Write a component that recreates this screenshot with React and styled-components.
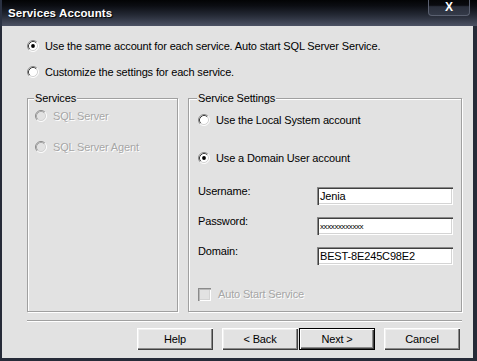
import React from "react"
import styled, { createGlobalStyle } from "styled-components"

const GlobalStyle = createGlobalStyle`
  html, body {
    margin: 0;
    padding: 0;
    background: #262b38;
  }
  * {
    box-sizing: border-box;
  }
`

const FACE = "#e2e2e2"

const Radio = ({ checked, disabled }) => (
  <RadioSvg width="12" height="12" viewBox="0 0 12 12">
    <circle cx="6" cy="6" r="5" fill={disabled ? FACE : "#fff"} />
    <path d="M2.11 9.89 A5.5 5.5 0 0 1 9.89 2.11" fill="none" stroke="#8a8a8a" strokeWidth="1" />
    <path d="M2.82 9.18 A4.5 4.5 0 0 1 9.18 2.82" fill="none" stroke={disabled ? "#a8a8a8" : "#404040"} strokeWidth="1" />
    <path d="M9.89 2.11 A5.5 5.5 0 0 1 2.11 9.89" fill="none" stroke="#fff" strokeWidth="1" />
    <path d="M9.18 2.82 A4.5 4.5 0 0 1 2.82 9.18" fill="none" stroke="#d4d4d4" strokeWidth="1" />
    {checked && <circle cx="6" cy="6" r="1.9" fill="#000" />}
  </RadioSvg>
)

const Services = () => (
  <Frame>
    <GlobalStyle />
    <TitleBar>
      <Title>Services Accounts</Title>
      <CloseButton>X</CloseButton>
    </TitleBar>
    <Body>
      <TopOptions>
        <Option>
          <Radio checked />
          <OptionText>Use the same account for each service. Auto start SQL Server Service.</OptionText>
        </Option>
        <Option>
          <Radio />
          <OptionText>Customize the settings for each service.</OptionText>
        </Option>
      </TopOptions>

      <Groups>
        <GroupBox $pad={7}>
          <Legend>Services</Legend>
          <Option $top={4}>
            <Radio disabled />
            <OptionText $disabled>SQL Server</OptionText>
          </Option>
          <Option $top={17}>
            <Radio disabled />
            <OptionText $disabled>SQL Server Agent</OptionText>
          </Option>
        </GroupBox>

        <GroupBox $pad={9}>
          <Legend>Service Settings</Legend>
          <Option $top={8}>
            <Radio />
            <OptionText>Use the Local System account</OptionText>
          </Option>
          <Option $top={24}>
            <Radio checked />
            <OptionText>Use a Domain User account</OptionText>
          </Option>

          <FieldRow $top={22}>
            <FieldLabel>Username:</FieldLabel>
            <Field>Jenia</Field>
          </FieldRow>
          <FieldRow $top={12}>
            <FieldLabel>Password:</FieldLabel>
            <Field $secret>xxxxxxxxxxxx</Field>
          </FieldRow>
          <FieldRow $top={12}>
            <FieldLabel>Domain:</FieldLabel>
            <Field>BEST-8E245C98E2</Field>
          </FieldRow>

          <Option $top={22}>
            <CheckBox />
            <OptionText $disabled>Auto Start Service</OptionText>
          </Option>
        </GroupBox>
      </Groups>

      <Separator />

      <ButtonRow>
        <Button>Help</Button>
        <WizardPair>
          <Button>&lt; Back</Button>
          <Button $default>Next &gt;</Button>
        </WizardPair>
        <Button>Cancel</Button>
      </ButtonRow>
    </Body>
  </Frame>
)

export default function App() {
  return <Services />
}

const Frame = styled.div`
  width: 477px;
  height: 361px;
  display: flex;
  flex-direction: column;
  background: #262b38;
  font-family: "Liberation Sans", Arial, sans-serif;
  font-size: 11px;
  letter-spacing: -0.15px;
  color: #000;
  overflow: hidden;
`

const TitleBar = styled.div`
  height: 26px;
  flex: none;
  display: flex;
  justify-content: space-between;
  align-items: flex-start;
  background: linear-gradient(to bottom, #030405 0%, #0b0d12 22%, #262b37 60%, #4c5264 100%);
  border-left: 2px solid #2a3142;
`

const Title = styled.div`
  padding: 7px 0 0 6px;
  font-size: 11.5px;
  font-weight: bold;
  letter-spacing: 0.1px;
  color: #fff;
  text-shadow: 1px 1px 1px #000;
`

const CloseButton = styled.div`
  width: 42px;
  height: 16px;
  margin-right: 7px;
  display: flex;
  align-items: center;
  justify-content: center;
  border: 1px solid #5a6070;
  border-top: none;
  border-radius: 0 0 4px 4px;
  background: linear-gradient(to bottom, #050608 0%, #0a0b10 35%, #2a2f3c 45%, #343a48 100%);
  color: #fff;
  font-weight: bold;
  font-size: 12px;
  padding-bottom: 2px;
`

const Body = styled.div`
  flex: 1;
  display: flex;
  flex-direction: column;
  margin: 0 4px 3px 2px;
  padding: 13px 11px 0 25px;
  background: ${FACE};
`

const TopOptions = styled.div`
  display: flex;
  flex-direction: column;
  gap: 12px;
`

const Option = styled.div`
  display: flex;
  align-items: center;
  gap: 6px;
  height: 14px;
  margin-top: ${props => props.$top || 0}px;
`

const RadioSvg = styled.svg`
  display: block;
  flex: none;
`

const OptionText = styled.span`
  line-height: 13px;
  white-space: nowrap;
  color: ${props => (props.$disabled ? "#a6a6a6" : "#000")};
  text-shadow: ${props => (props.$disabled ? "1px 1px 0 #fff" : "none")};
`

const Groups = styled.div`
  display: grid;
  grid-template-columns: 151px 274px;
  column-gap: 10px;
  height: 220px;
  margin-top: 13px;
`

const GroupBox = styled.fieldset`
  margin: 0;
  min-width: 0;
  padding: 0 0 0 ${props => props.$pad}px;
  border: 1px solid #a0a0a0;
  box-shadow: inset 1px 1px 0 #fff, 1px 1px 0 #fff;
  display: flex;
  flex-direction: column;
`

const Legend = styled.legend`
  padding: 0 1px;
  margin-left: -1px;
  line-height: 13px;
  background: ${FACE};
  color: #000;
`

const FieldRow = styled.div`
  display: flex;
  align-items: flex-start;
  height: 18px;
  margin-top: ${props => props.$top}px;
`

const FieldLabel = styled.span`
  width: 119px;
  margin-top: -2px;
  line-height: 13px;
`

const Field = styled.div`
  width: 136px;
  height: 18px;
  padding: 0 0 0 3px;
  display: flex;
  align-items: center;
  background: #fff;
  box-shadow: inset 1px 1px 0 #8a8a8a, inset 2px 2px 0 #404040, inset -1px -1px 0 #fff, inset -2px -2px 0 #d4d4d4;
  font-size: ${props => (props.$secret ? "8px" : "11px")};
  letter-spacing: ${props => (props.$secret ? "-0.4px" : "-0.15px")};
  white-space: nowrap;
`

const CheckBox = styled.span`
  display: block;
  flex: none;
  width: 13px;
  height: 13px;
  margin-right: 1px;
  background: ${FACE};
  box-shadow: inset 1px 1px 0 #8a8a8a, inset 2px 2px 0 #b8b8b8, inset -1px -1px 0 #fff, inset -2px -2px 0 #d4d4d4;
`

const Separator = styled.div`
  height: 2px;
  margin-top: 8px;
  border-top: 1px solid #a0a0a0;
  border-bottom: 1px solid #fff;
`

const ButtonRow = styled.div`
  display: flex;
  justify-content: flex-end;
  gap: 9px;
  margin: 6px 2px 0 0;
`

const WizardPair = styled.div`
  display: flex;
  gap: 1px;
`

const Button = styled.div`
  width: 76px;
  height: 22px;
  display: flex;
  align-items: center;
  justify-content: center;
  background: ${FACE};
  border: ${props => (props.$default ? "1px solid #000" : "none")};
  box-shadow: ${props =>
    props.$default
      ? "inset 1px 1px 0 #fff, inset -1px -1px 0 #404040, inset -2px -2px 0 #8a8a8a"
      : "inset 1px 1px 0 #fff, inset -1px -1px 0 #404040, inset -2px -2px 0 #8a8a8a, inset 2px 2px 0 #f0f0f0"};
`
